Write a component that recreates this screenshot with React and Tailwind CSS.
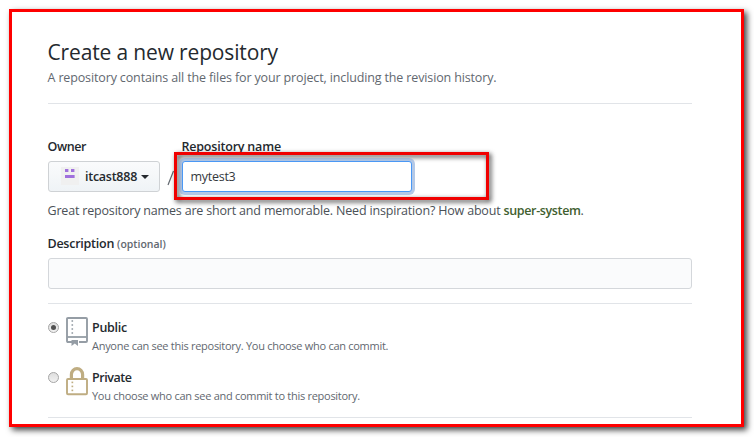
function Identicon() {
  return (
    <svg width="18" height="18" viewBox="0 0 18 18" className="block">
      <rect width="18" height="18" fill="#f0f0f0" />
      <g fill="#a070dd">
        <rect x="4" y="2" width="3.4" height="3" />
        <rect x="10" y="2" width="3.4" height="3" />
        <rect x="4" y="8" width="9.6" height="3" />
      </g>
    </svg>
  );
}

function RepoIcon() {
  return (
    <svg width="23" height="30" viewBox="0 0 23 30" className="block">
      <path d="M7 25H2Q1 25 1 24V2Q1 1 2 1H20Q21 1 21 2V24Q21 25 20 25H13" fill="none" stroke="#959da5" strokeWidth="1.9" />
      <path d="M1 20H21" stroke="#959da5" strokeWidth="1.8" />
      <path d="M5.5 23H12V29L8.8 26.4L5.5 29Z" fill="#959da5" />
      <g fill="#959da5">
        <rect x="5.5" y="3.2" width="1.6" height="1.6" />
        <rect x="5.5" y="7.2" width="1.6" height="1.6" />
        <rect x="5.5" y="11.2" width="1.6" height="1.6" />
        <rect x="5.5" y="15.2" width="1.6" height="1.6" />
      </g>
    </svg>
  );
}

function LockIcon() {
  return (
    <svg width="23" height="30" viewBox="0 0 23 30" className="block">
      <path d="M5.4 12V7.6A5.6 6 0 0 1 16.6 7.6V12" fill="none" stroke="#bfad82" strokeWidth="3.2" />
      <rect x="1" y="12" width="20" height="15.2" rx="1" fill="#fff" stroke="#bfad82" strokeWidth="1.9" />
      <g fill="#bfad82">
        <rect x="5.5" y="14.6" width="1.7" height="1.6" />
        <rect x="5.5" y="18.6" width="1.7" height="1.6" />
        <rect x="5.5" y="22.6" width="1.7" height="1.6" />
      </g>
    </svg>
  );
}

function Radio({ checked }) {
  return (
    <span className="mt-[5px] flex size-[11px] shrink-0 items-center justify-center rounded-full border border-[#a5a5a5] bg-linear-to-b from-[#dedede] to-[#f1f1f1]">
      {checked && <span className="size-[5px] rounded-full bg-[#505050]" />}
    </span>
  );
}

function Option({ checked, icon, title, titleClass, text }) {
  return (
    <div className="flex h-[37px]">
      <Radio checked={checked} />
      <span className="ml-[7px] w-[23px] shrink-0">{icon}</span>
      <div className="ml-[3.5px] pt-px">
        <div className={"text-[12.5px] leading-5 font-semibold text-[#24292e] " + titleClass}>{title}</div>
        <div className="text-[11px] leading-4 tracking-[-0.28px] text-[#62686f]">{text}</div>
      </div>
    </div>
  );
}

export default function App() {
  return (
    <div className="h-[437px] w-[754px] overflow-hidden bg-white pt-[9px] pl-[9px] font-['Open_Sans','Noto_Sans',sans-serif] whitespace-nowrap">
      <main className="h-[418px] w-[735px] border-[3px] border-[#fe0000] bg-white pt-[26px] pl-[35.5px] shadow-[3px_3px_6px_rgba(0,0,0,0.75)]">
        <div className="w-[644px] text-[12.5px] leading-5 text-[#24292e]">
          <header className="h-[66px] border-b border-[#e1e4e8]">
            <h1 className="text-[21px] leading-7 tracking-[-0.15px]">Create a new repository</h1>
            <p className="mt-[2px] tracking-[-0.137px] text-[#62686f]">A repository contains all the files for your project, including the revision history.</p>
          </header>

          <div className="mt-[33px] flex">
            <div className="w-28">
              <div className="font-semibold tracking-[-0.4px]">Owner</div>
              <button className="mt-1 flex h-[31px] w-28 items-center rounded-[3px] border border-[#cfd2d5] bg-linear-to-b from-[#fafbfc] to-[#eff3f6] pl-3">
                <span className="-mt-px"><Identicon /></span>
                <span className="ml-[6.5px] pt-px font-semibold tracking-[-0.26px]">itcast888</span>
                <span className="ml-[4px] border-x-4 border-t-4 border-x-transparent border-t-[#24292e]" />
              </button>
            </div>
            <svg width="8" height="18" viewBox="0 0 8 18" className="mt-8 ml-[7px] block">
              <path d="M1 16L6.5 2" stroke="#62686f" strokeWidth="1.2" />
            </svg>
            <div className="relative ml-[7px]">
              <div className="font-semibold tracking-[-0.2px]">Repository name</div>
              <div className="pointer-events-none absolute top-[15px] -left-2 h-12 w-[315.5px] border-[3px] border-[#f00000] drop-shadow-[2px_2px_2.5px_rgba(0,0,0,0.8)]" />
              <div className="relative mt-1 flex h-[31px] w-[230px] items-center rounded-[3px] border border-[#4a98f5] bg-white pt-px pl-2 tracking-[-0.27px] text-[#34383d] shadow-[0_0_0_3px_rgba(130,165,215,0.6)]">
                mytest3
              </div>
            </div>
          </div>

          <p className="mt-[9px] tracking-[-0.18px] text-[#4b5157]">
            Great repository names are short and memorable. Need inspiration? How about{" "}
            <strong className="font-semibold tracking-[-0.36px] text-[#41602f]">super-system</strong>.
          </p>

          <div className="mt-[13px] font-semibold tracking-[-0.25px]">
            Description <span className="text-[10.5px] tracking-normal text-[#62686f]">(optional)</span>
          </div>
          <div className="mt-1 h-[31px] rounded-[3px] border border-[#d4d7db] bg-[#fafbfc]" />

          <div className="mt-[14px] flex h-[115px] flex-col gap-[13px] border-y border-[#e1e4e8] pt-[13px]">
            <Option checked icon={<RepoIcon />} title="Public" titleClass="tracking-[-0.27px]" text="Anyone can see this repository. You choose who can commit." />
            <Option icon={<LockIcon />} title="Private" titleClass="tracking-[-0.46px]" text="You choose who can see and commit to this repository." />
          </div>
        </div>
      </main>
    </div>
  );
}
